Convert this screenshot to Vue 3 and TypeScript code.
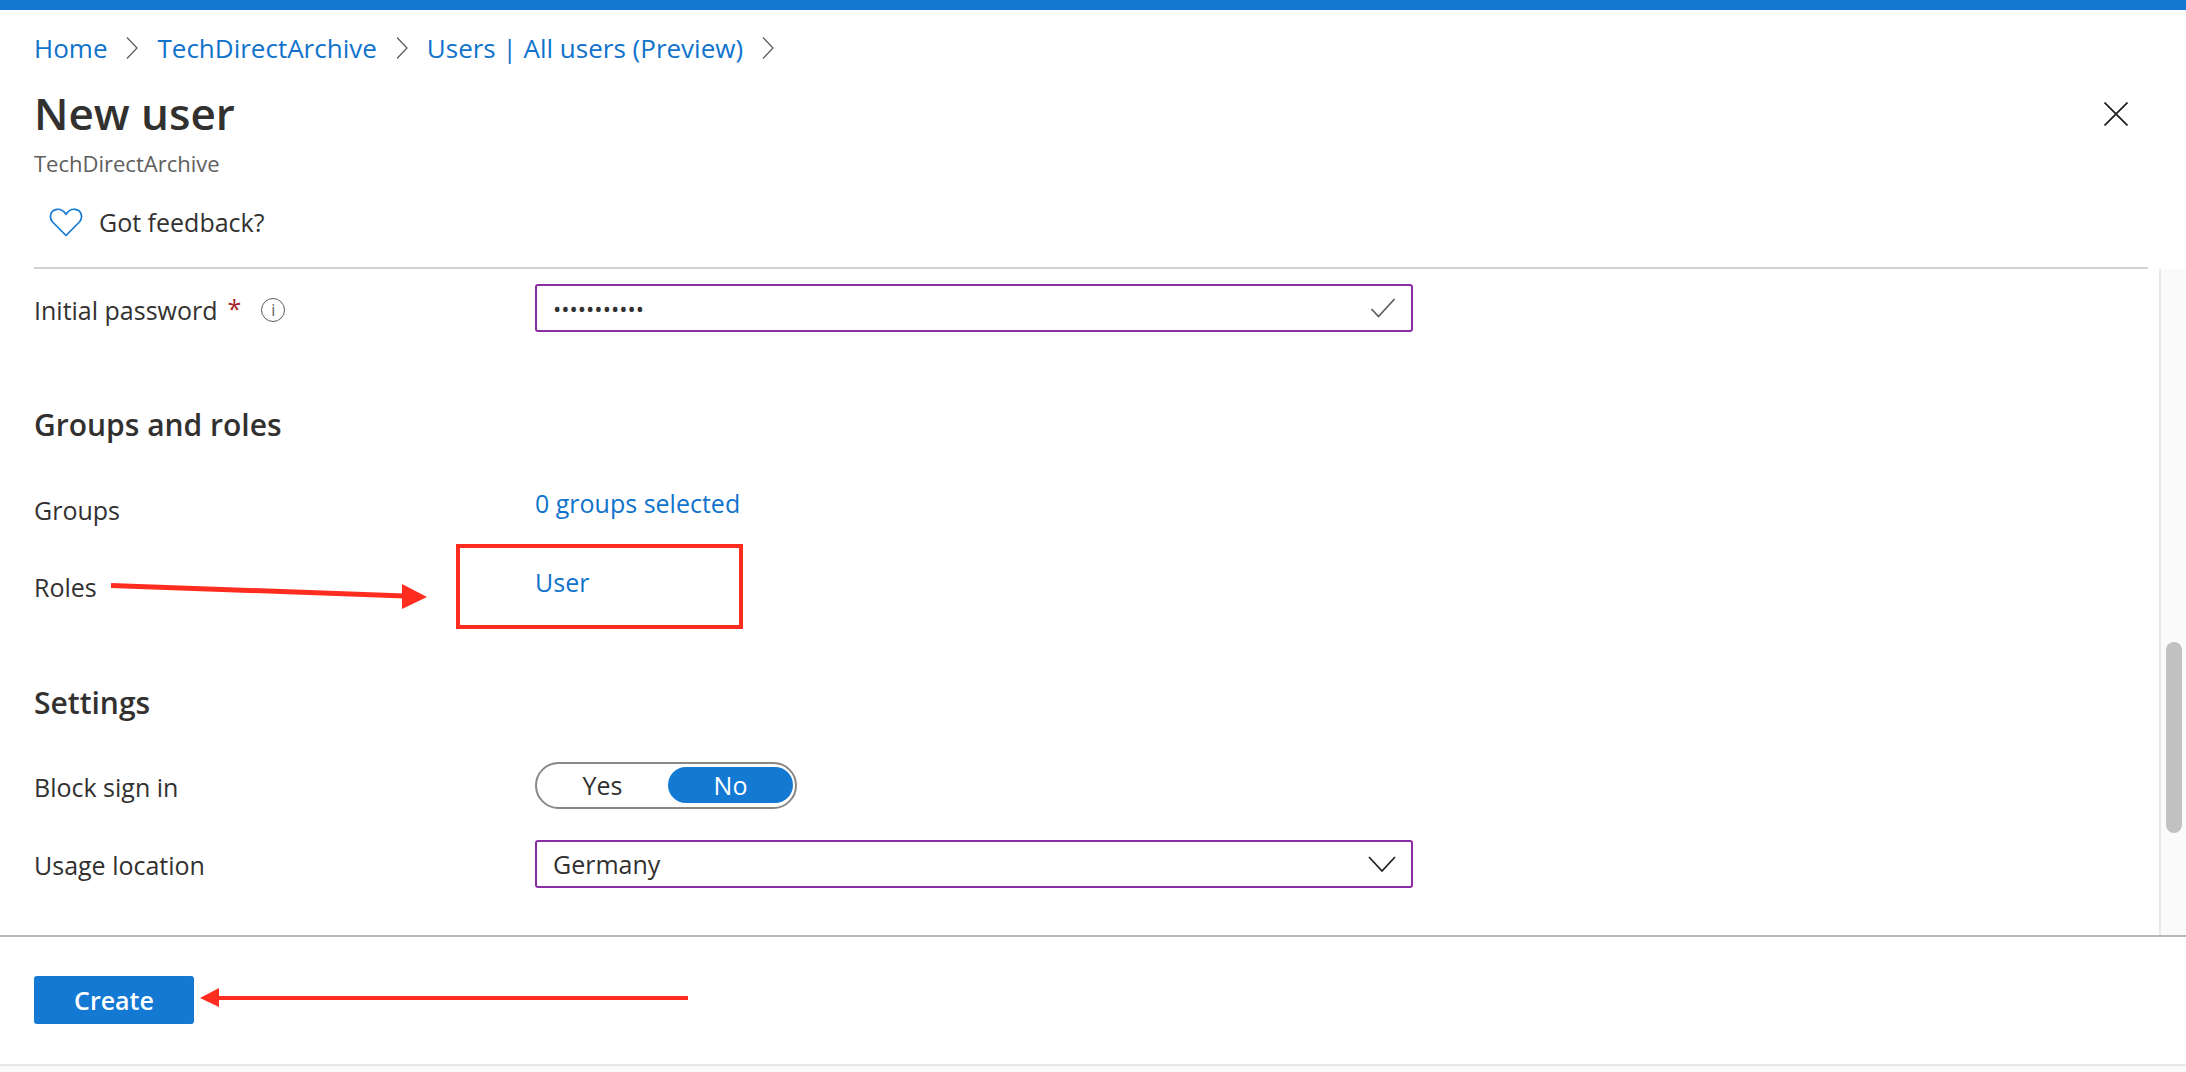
<script setup lang="ts">
const crumbs: string[] = ['Home', 'TechDirectArchive', 'Users | All users (Preview)']
</script>

<template>
  <div class="page">
    <div class="topbar"></div>
    <header class="head">
      <nav class="crumbs">
        <template v-for="c in crumbs" :key="c">
          <a class="link">{{ c }}</a>
          <svg class="sep" width="14" height="24" viewBox="0 0 14 24"><path d="M2 1.5 L12 12 L2 22.5" fill="none" stroke="#605e5c" stroke-width="1.3" /></svg>
        </template>
      </nav>
      <div class="title-row">
        <div>
          <h1 class="title">New user</h1>
          <div class="sub">TechDirectArchive</div>
        </div>
        <svg class="close" width="24" height="24" viewBox="0 0 24 24"><path d="M0.5 0.5 L23.5 23.5 M23.5 0.5 L0.5 23.5" fill="none" stroke="#201f1e" stroke-width="1.7" /></svg>
      </div>
      <div class="toolbar">
        <svg width="34" height="29" viewBox="0 0 34 29"><path d="M17 27.5 L3.6 14 C-0.4 9.6 1.4 2 8 1.3 C11.8 1 15 3 17 6.4 C19 3 22.2 1 26 1.3 C32.6 2 34.4 9.6 30.4 14 Z" fill="none" stroke="#1379d3" stroke-width="1.7" stroke-linejoin="round" /></svg>
        <span class="feedback">Got feedback?</span>
      </div>
    </header>

    <div class="body">
      <main class="form">
        <div class="row pw">
          <div class="label">
            Initial password <span class="req">*</span>
            <span class="info">i</span>
          </div>
          <div class="field">
            <span class="dots">•••••••••••</span>
            <svg width="26" height="20" viewBox="0 0 26 20"><path d="M1.5 11 L8.5 18.5 L24.5 1" fill="none" stroke="#605e5c" stroke-width="1.7" /></svg>
          </div>
        </div>

        <h2 class="section first">Groups and roles</h2>
        <div class="row groups">
          <div class="label">Groups</div>
          <a class="link value v1">0 groups selected</a>
        </div>
        <div class="row roles">
          <div class="label">Roles</div>
          <a class="link value v2">User</a>
        </div>

        <h2 class="section second">Settings</h2>
        <div class="row block">
          <div class="label">Block sign in</div>
          <div class="toggle">
            <span class="opt">Yes</span>
            <span class="opt on">No</span>
          </div>
        </div>
        <div class="row loc">
          <div class="label">Usage location</div>
          <div class="field">
            <span>Germany</span>
            <svg width="28" height="16" viewBox="0 0 28 16"><path d="M1 1 L14 15 L27 1" fill="none" stroke="#201f1e" stroke-width="1.7" /></svg>
          </div>
        </div>
      </main>
      <aside class="rail"><div class="thumb"></div></aside>
    </div>

    <footer class="foot">
      <button class="create">Create</button>
    </footer>
    <div class="strip"></div>

    <div class="redbox"></div>
    <svg class="annot" width="2186" height="1072" viewBox="0 0 2186 1072">
      <path d="M111 585.5 L405 596" stroke="#ff2d20" stroke-width="5" fill="none" />
      <path d="M402 584 L427 597 L402 609 Z" fill="#ff2d20" />
      <path d="M218 998 L688 998" stroke="#ff2d20" stroke-width="4" fill="none" />
      <path d="M219 988 L200 998 L219 1007 Z" fill="#ff2d20" />
    </svg>
  </div>
</template>

<style scoped>
.page {
  position: relative;
  width: 2186px;
  height: 1072px;
  overflow: hidden;
  display: flex;
  flex-direction: column;
  background: #fff;
  color: #323130;
  font-family: "Open Sans", "Noto Sans", sans-serif;
  font-size: 25px;
}
.topbar { height: 10px; background: #1379d3; flex: none; }
.head { padding: 0 0 0 34px; flex: none; height: 259px; box-sizing: border-box; }
.crumbs { display: flex; align-items: center; height: 76px; margin-top: 0; padding-bottom: 0; }
.crumbs { font-size: 26px; }
.sep { margin: 0 18px 0 18px; }
.link { color: #0f73cc; white-space: nowrap; }
.title-row { display: flex; justify-content: space-between; align-items: flex-start; }
.title { margin: 0; font-size: 44px; font-weight: 600; line-height: 54px; color: #323130; }
.sub { font-size: 22px; color: #605e5c; line-height: 30px; margin-top: 8px; margin-left: 0; }
.close { margin: 16px 58px 0 0; }
.toolbar { display: flex; align-items: center; gap: 16px; margin: 26px 0 0 15px; height: 36px; }
.feedback { font-size: 25px; color: #323130; }
.head { border-bottom: 0; }
.body { flex: none; height: 666px; display: flex; border-top: 0; position: relative; }
.body::before { content: ""; position: absolute; left: 34px; top: -2px; width: 2114px; height: 2px; background: #d2d2d2; }
.form { flex: 1; padding: 15px 0 0 34px; }
.rail { width: 27px; box-sizing: border-box; background: #fafafa; border-left: 2px solid #e8e8e8; position: relative; padding: 373px 4px 0 5px; }
.thumb { height: 191px; background: #c1c1c1; border-radius: 8px; }
.row { display: grid; grid-template-columns: 501px 878px; align-items: start; }
.label { font-size: 25px; font-weight: 500; line-height: 40px; white-space: nowrap; display: flex; align-items: center; }
.pw .label { padding-top: 6px; }
.req { color: #a4262c; margin-left: 10px; position: relative; top: -2px; }
.info { display: inline-flex; width: 24px; height: 24px; box-sizing: border-box; border: 1.5px solid #605e5c; border-radius: 50%; align-items: center; justify-content: center; font-size: 16px; font-weight: 400; line-height: 1; margin-left: 20px; color: #605e5c; }
.field { height: 48px; box-sizing: border-box; border: 2px solid #8a2da5; border-radius: 3px; display: flex; align-items: center; justify-content: space-between; padding: 0 15px 0 16px; font-size: 25px; }
.dots { font-size: 22px; letter-spacing: 0; color: #323130; }
.section { margin: 0; font-size: 30px; font-weight: 600; line-height: 40px; color: #323130; }
.first { margin-top: 73px; }
.groups { margin-top: 45px; height: 77px; }
.value { font-size: 25px; line-height: 40px; margin-top: -7px; }
.v2 { margin-top: -5px; }
.roles { height: 96px; }
.second { margin-top: 20px; }
.block { margin-top: 39px; height: 78px; }
.block .label { padding-top: 5px; }
.toggle { width: 262px; height: 47px; box-sizing: border-box; border: 2px solid #8a8886; border-radius: 24px; display: flex; align-items: center; padding: 4px 2px 5px 0; }
.opt { height: 36px; line-height: 36px; text-align: center; font-size: 25px; }
.opt:first-child { width: 131px; }
.opt.on { width: 125px; background: #1379d3; color: #fff; border-radius: 18px; }
.loc .label { padding-top: 5px; }
.foot { flex: none; border-top: 2px solid #b8b8b8; height: 129px; box-sizing: border-box; padding: 39px 0 0 34px; margin-top: 0; }
.create { display: block; width: 160px; height: 48px; border: 0; border-radius: 3px; background: #1379d3; color: #fff; font: 600 25px "Open Sans", "Noto Sans", sans-serif; padding: 0; }
.strip { flex: none; height: 8px; background: #fafafa; border-top: 2px solid #e8e8e8; }
.redbox { position: absolute; left: 456px; top: 544px; width: 287px; height: 85px; box-sizing: border-box; border: 4px solid #ff2d20; }
.annot { position: absolute; left: 0; top: 0; pointer-events: none; }
</style>
